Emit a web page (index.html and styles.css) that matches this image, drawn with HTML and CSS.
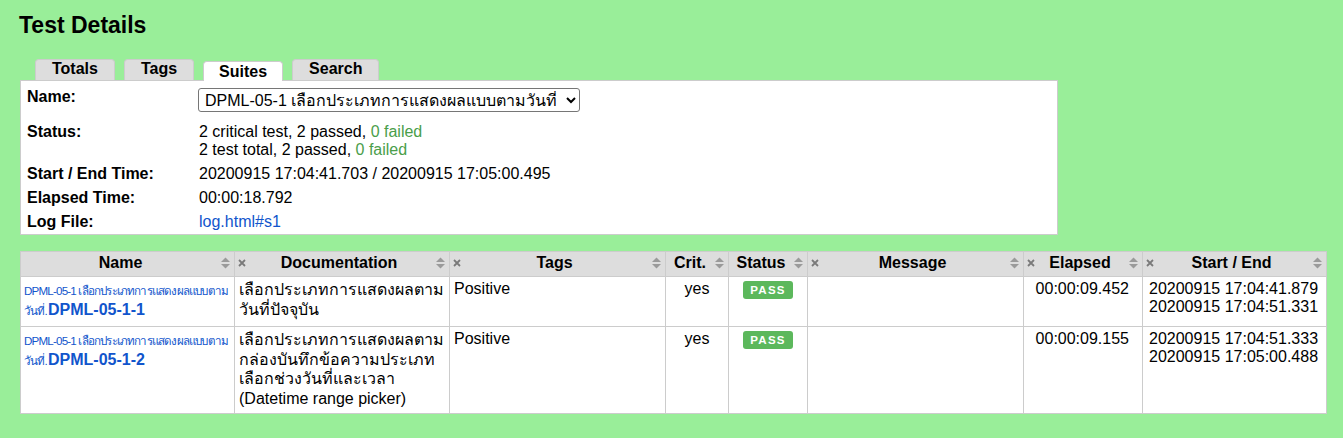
FILE: index.html
```html
<!DOCTYPE html>
<html lang="en">
<head>
<meta charset="utf-8">
<title>Test Details</title>
<link rel="stylesheet" href="styles.css">
</head>
<body>
<h2 class="title">Test Details</h2>
<div class="tabs">
  <div class="tab">Totals</div>
  <div class="tab">Tags</div>
  <div class="tab tab-selected">Suites</div>
  <div class="tab">Search</div>
</div>
<div class="panel">
  <table class="details">
    <tr>
      <th>Name:</th>
      <td><select class="suite-select"><option>DPML-05-1 เลือกประเภทการแสดงผลแบบตามวันที่</option></select></td>
    </tr>
    <tr>
      <th>Status:</th>
      <td>2 critical test, 2 passed, <span class="pass">0 failed</span><br>2 test total, 2 passed, <span class="pass">0 failed</span></td>
    </tr>
    <tr>
      <th>Start / End Time:</th>
      <td>20200915 17:04:41.703 / 20200915 17:05:00.495</td>
    </tr>
    <tr>
      <th>Elapsed Time:</th>
      <td>00:00:18.792</td>
    </tr>
    <tr>
      <th>Log File:</th>
      <td><a class="link" href="#">log.html#s1</a></td>
    </tr>
  </table>
</div>

<table class="tests">
  <colgroup>
    <col class="w-name"><col class="w-doc"><col class="w-tags"><col class="w-crit"><col class="w-status"><col class="w-msg"><col class="w-elapsed"><col class="w-times">
  </colgroup>
  <thead>
    <tr>
      <th><div class="th-inner"><span class="th-label">Name</span><svg class="sort" width="9" height="12" viewBox="0 0 9 12"><polygon points="0,5 4.5,0.5 9,5"/><polygon points="0,7 4.5,11.5 9,7"/></svg></div></th>
      <th><div class="th-inner"><svg class="hide" width="8" height="8" viewBox="0 0 8 8"><path d="M1 1L7 7M7 1L1 7"/></svg><span class="th-label">Documentation</span><svg class="sort" width="9" height="12" viewBox="0 0 9 12"><polygon points="0,5 4.5,0.5 9,5"/><polygon points="0,7 4.5,11.5 9,7"/></svg></div></th>
      <th><div class="th-inner"><svg class="hide" width="8" height="8" viewBox="0 0 8 8"><path d="M1 1L7 7M7 1L1 7"/></svg><span class="th-label">Tags</span><svg class="sort" width="9" height="12" viewBox="0 0 9 12"><polygon points="0,5 4.5,0.5 9,5"/><polygon points="0,7 4.5,11.5 9,7"/></svg></div></th>
      <th><div class="th-inner"><span class="th-label">Crit.</span><svg class="sort" width="9" height="12" viewBox="0 0 9 12"><polygon points="0,5 4.5,0.5 9,5"/><polygon points="0,7 4.5,11.5 9,7"/></svg></div></th>
      <th><div class="th-inner"><span class="th-label">Status</span><svg class="sort" width="9" height="12" viewBox="0 0 9 12"><polygon points="0,5 4.5,0.5 9,5"/><polygon points="0,7 4.5,11.5 9,7"/></svg></div></th>
      <th><div class="th-inner"><svg class="hide" width="8" height="8" viewBox="0 0 8 8"><path d="M1 1L7 7M7 1L1 7"/></svg><span class="th-label">Message</span><svg class="sort" width="9" height="12" viewBox="0 0 9 12"><polygon points="0,5 4.5,0.5 9,5"/><polygon points="0,7 4.5,11.5 9,7"/></svg></div></th>
      <th><div class="th-inner"><svg class="hide" width="8" height="8" viewBox="0 0 8 8"><path d="M1 1L7 7M7 1L1 7"/></svg><span class="th-label">Elapsed</span><svg class="sort" width="9" height="12" viewBox="0 0 9 12"><polygon points="0,5 4.5,0.5 9,5"/><polygon points="0,7 4.5,11.5 9,7"/></svg></div></th>
      <th><div class="th-inner"><svg class="hide" width="8" height="8" viewBox="0 0 8 8"><path d="M1 1L7 7M7 1L1 7"/></svg><span class="th-label">Start / End</span><svg class="sort" width="9" height="12" viewBox="0 0 9 12"><polygon points="0,5 4.5,0.5 9,5"/><polygon points="0,7 4.5,11.5 9,7"/></svg></div></th>
    </tr>
  </thead>
  <tbody>
    <tr class="row-short">
      <td class="name"><a class="link parent-name" href="#">DPML-05-1 เลือกประเภทการแสดงผลแบบตาม<br>วันที่.</a><a class="link test-name" href="#">DPML-05-1-1</a></td>
      <td class="doc">เลือกประเภทการแสดงผลตามวันที่ปัจจุบัน</td>
      <td>Positive</td>
      <td class="center">yes</td>
      <td class="center"><span class="label-pass">PASS</span></td>
      <td></td>
      <td class="elapsed">00:00:09.452</td>
      <td class="times">20200915 17:04:41.879<br>20200915 17:04:51.331</td>
    </tr>
    <tr class="row-tall">
      <td class="name"><a class="link parent-name" href="#">DPML-05-1 เลือกประเภทการแสดงผลแบบตาม<br>วันที่.</a><a class="link test-name" href="#">DPML-05-1-2</a></td>
      <td class="doc">เลือกประเภทการแสดงผลตามกล่องบันทึกข้อความประเภทเลือกช่วงวันที่และเวลา (Datetime range picker)</td>
      <td>Positive</td>
      <td class="center">yes</td>
      <td class="center"><span class="label-pass">PASS</span></td>
      <td></td>
      <td class="elapsed">00:00:09.155</td>
      <td class="times">20200915 17:04:51.333<br>20200915 17:05:00.488</td>
    </tr>
  </tbody>
</table>
</body>
</html>
```

FILE: styles.css
```css
html, body {
  margin: 0;
  background: #99ee99;
}

body {
  padding: 9px 0 0 20px;
  font-family: "Liberation Sans", Arial, sans-serif;
  font-size: 16px;
  color: #000;
}

.title {
  margin: 3px 0 21px -1px;
  font-size: 23px;
  font-weight: bold;
  line-height: 26px;
}

.tabs {
  display: flex;
  align-items: flex-end;
  gap: 9px;
  height: 21px;
  padding-left: 15px;
}

.tab {
  background: #dddddd;
  border: 1px solid #cccccc;
  border-bottom: none;
  border-radius: 4px 4px 0 0;
  padding: 0 16px 2px;
  font-weight: bold;
  line-height: 18px;
  height: 18px;
}

.tab-selected {
  background: #ffffff;
  position: relative;
  z-index: 1;
  margin-bottom: -1px;
  padding: 0 15px 0;
  line-height: 19px;
  height: 19px;
}

.panel {
  width: 1030px;
  background: #ffffff;
  border: 1px solid #cccccc;
  padding: 4px 3px 0 3px;
}

.details {
  border-collapse: separate;
  border-spacing: 0;
}

.details th {
  width: 166px;
  text-align: left;
  vertical-align: top;
  padding: 3px;
  line-height: 18px;
  font-weight: bold;
}

.details td {
  vertical-align: top;
  padding: 3px;
  line-height: 18px;
}

.suite-select {
  display: block;
  width: 382px;
  height: 24px;
  margin: 0 0 5px -1px;
  font-family: "Liberation Sans", Arial, sans-serif;
  font-size: 16px;
  color: #000;
  background: #fff;
  border: 1px solid #767676;
  border-radius: 3px;
  padding: 0 2px;
}

.pass {
  color: #4a9e4a;
}

.link {
  color: #1155cc;
  text-decoration: none;
}

.tests {
  margin-top: 16px;
  width: 1306px;
  table-layout: fixed;
  border-collapse: collapse;
  background: #ffffff;
}

.w-name { width: 214px; }
.w-doc { width: 215px; }
.w-tags { width: 216px; }
.w-crit { width: 63px; }
.w-status { width: 79px; }
.w-msg { width: 216px; }
.w-elapsed { width: 119px; }
.w-times { width: 184px; }

.tests th {
  background: #dddddd;
  border: 1px solid #cccccc;
  padding: 2px 4px 4px 3px;
  line-height: 18px;
  font-weight: bold;
}

.th-inner {
  display: flex;
  align-items: center;
}

.th-label {
  flex: 1;
  text-align: center;
  white-space: nowrap;
}

.sort {
  flex: none;
  margin-left: 4px;
  fill: #9a9a9a;
}

.hide {
  flex: none;
  stroke: #7a7a7a;
  stroke-width: 1.8;
}

.tests td {
  border: 1px solid #cccccc;
  vertical-align: top;
  padding: 3px 4px;
  line-height: 18px;
}

.row-short td {
  height: 43px;
}

.row-tall td {
  height: 80px;
}

.tests td.doc {
  line-height: 19.5px;
}

.tests td.name {
  padding-left: 3px;
  line-height: 19px;
}

.parent-name {
  font-size: 11.6px;
  letter-spacing: -0.07em;
}

.test-name {
  font-weight: bold;
  font-size: 16px;
  margin-left: 1px;
}

.tests td.center {
  text-align: center;
}

.tests td.elapsed {
  text-align: right;
  padding-right: 13px;
}

.tests td.times {
  padding-left: 6px;
}

.label-pass {
  display: inline-block;
  margin-top: 1px;
  width: 50px;
  height: 18px;
  line-height: 18px;
  border-radius: 3px;
  background: #5cb85c;
  color: #ffffff;
  font-size: 11.5px;
  font-weight: bold;
  letter-spacing: 1.3px;
  text-align: center;
}
```
